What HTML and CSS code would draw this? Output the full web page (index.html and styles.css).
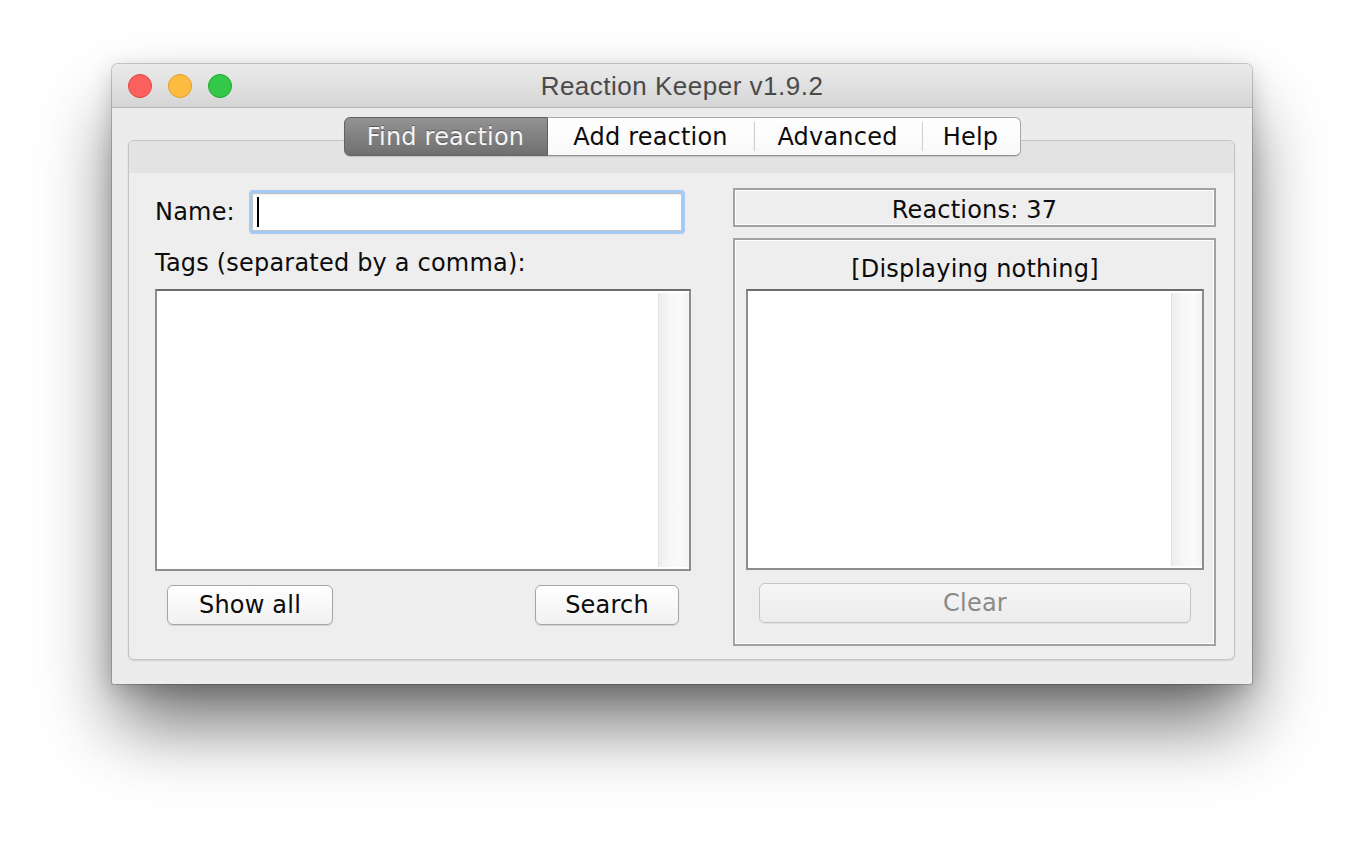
FILE: index.html
```html
<!DOCTYPE html>
<html>
<head>
<meta charset="utf-8">
<title>Reaction Keeper v1.9.2</title>
<link rel="stylesheet" href="styles.css">
</head>
<body>
<div class="window">
  <div class="titlebar">
    <div class="lights">
      <span class="light red"></span>
      <span class="light yellow"></span>
      <span class="light green"></span>
    </div>
    <div class="title">Reaction Keeper v1.9.2</div>
    <div class="spacer"></div>
  </div>
  <div class="content">
    <div class="tabs">
      <div class="tab tab-sel">Find reaction</div>
      <div class="tab tab-add">Add reaction</div>
      <div class="tab tab-adv">Advanced</div>
      <div class="tab tab-help">Help</div>
    </div>
    <div class="pane">
      <div class="pane-band"></div>
      <div class="pane-body">
        <div class="left">
          <div class="name-row">
            <span class="label">Name:</span>
            <div class="input"><span class="caret"></span></div>
          </div>
          <div class="label tags-label">Tags (separated by a comma):</div>
          <div class="listbox tags-box">
            <div class="list-area"></div>
            <div class="scrolltrack"></div>
          </div>
          <div class="button-row">
            <div class="btn btn-show">Show all</div>
            <div class="btn btn-search">Search</div>
          </div>
        </div>
        <div class="right">
          <div class="etched count-box">Reactions: 37</div>
          <div class="etched display-box">
            <div class="display-title">[Displaying nothing]</div>
            <div class="listbox result-box">
              <div class="list-area"></div>
              <div class="scrolltrack"></div>
            </div>
            <div class="btn btn-clear">Clear</div>
          </div>
        </div>
      </div>
    </div>
  </div>
</div>
</body>
</html>
```

FILE: styles.css
```css
html, body {
  margin: 0;
  padding: 0;
  background: #ffffff;
}
body {
  width: 1364px;
  height: 844px;
  overflow: hidden;
  padding: 64px 0 0 112px;
  box-sizing: border-box;
  font-family: "DejaVu Sans", "Noto Sans", sans-serif;
  font-size: 24px;
  letter-spacing: 0.2px;
  color: #0c0c0c;
}
.window {
  width: 1140px;
  height: 620px;
  background: #ececec;
  border-radius: 6px 6px 2px 2px;
  box-shadow: 0 0 0 1px rgba(0,0,0,0.18), 0 44px 70px -6px rgba(0,0,0,0.58), 0 6px 22px rgba(0,0,0,0.18);
  overflow: hidden;
}
.titlebar {
  height: 43px;
  border-bottom: 1px solid #b3b3b3;
  background: linear-gradient(#ebebeb, #d5d5d5);
  display: grid;
  grid-template-columns: 1fr auto 1fr;
  align-items: center;
}
.lights {
  display: flex;
  gap: 16px;
  padding-left: 16px;
}
.light {
  width: 24px;
  height: 24px;
  border-radius: 50%;
  box-sizing: border-box;
}
.red { background: #fc605c; border: 1px solid #e0443e; }
.yellow { background: #fdbc40; border: 1px solid #dea123; }
.green { background: #34c84a; border: 1px solid #1aab29; }
.title {
  font-family: "Liberation Sans", Arial, sans-serif;
  font-size: 26px;
  letter-spacing: 0.5px;
  color: #4a4a4a;
  padding-top: 2px;
}
.content {
  padding: 9px 17px 24px 16px;
}
.tabs {
  position: relative;
  z-index: 2;
  display: flex;
  justify-content: center;
  height: 39px;
  margin-left: 1px;
}
.tab {
  box-sizing: border-box;
  height: 39px;
  display: flex;
  align-items: center;
  justify-content: center;
  background: linear-gradient(#ffffff, #f8f8f8);
  border-top: 1px solid #a9a9a9;
  border-bottom: 1px solid #8f8f8f;
  color: #0c0c0c;
  box-shadow: 0 1px 1px rgba(0,0,0,0.12);
  position: relative;
}
.tab-sel {
  width: 204px;
  background: linear-gradient(#939393, #6f6f6f);
  border: 1px solid #626262;
  border-radius: 6px 0 0 6px;
  color: #f6f6f6;
  text-shadow: 0 -1px 0 rgba(0,0,0,0.35);
}
.tab-add { width: 206px; }
.tab-adv { width: 168px; }
.tab-help {
  width: 99px;
  border-right: 1px solid #a9a9a9;
  border-radius: 0 6px 6px 0;
}
.tab-adv::before, .tab-help::before {
  content: "";
  position: absolute;
  left: 0;
  top: 4px;
  bottom: 4px;
  width: 1px;
  background: #cfcfcf;
}
.pane {
  margin-top: -16px;
  height: 520px;
  box-sizing: border-box;
  border: 1px solid #c4c4c4;
  border-radius: 6px;
  box-shadow: 0 1px 2px rgba(0,0,0,0.12);
  background: #eeeeee;
  overflow: hidden;
  display: flex;
  flex-direction: column;
}
.pane-band {
  height: 32px;
  background: #e3e3e3;
  flex: none;
}
.pane-body {
  flex: 1;
  display: flex;
  gap: 42px;
  padding: 15px 18px 0 26px;
}
.left {
  width: 536px;
  display: flex;
  flex-direction: column;
}
.right {
  width: 483px;
  display: flex;
  flex-direction: column;
}
.name-row {
  margin-top: 2px;
  height: 44px;
  display: flex;
  align-items: center;
}
.label {
  line-height: 28px;
}
.name-row .label {
  margin-right: 14px;
}
.input {
  width: 436px;
  height: 44px;
  box-sizing: border-box;
  border: 3px solid #a4cbf1;
  border-radius: 4px;
  background: #fff;
  box-shadow: inset 0 0 0 1px #c2c2c2, inset 0 2px 2px rgba(0,0,0,0.08);
  display: flex;
  align-items: center;
  padding-left: 5px;
}
.caret {
  width: 2px;
  height: 30px;
  background: #000;
}
.tags-label {
  margin-top: 15px;
}
.listbox {
  box-sizing: border-box;
  border: 2px solid #8d8d8d;
  border-top-color: #6c6c6c;
  background: #fff;
  display: flex;
}
.tags-box {
  margin-top: 12px;
  height: 282px;
}
.list-area {
  flex: 1;
}
.scrolltrack {
  width: 31px;
  margin: 2px 0;
  box-sizing: border-box;
  border-left: 1px solid #e2e2e2;
  background: linear-gradient(to right, #eeeeee, #f8f8f8 40%, #fafafa 70%, #f3f3f3);
}
.button-row {
  margin-top: 14px;
  padding: 0 12px;
  display: flex;
  justify-content: space-between;
}
.btn {
  height: 40px;
  box-sizing: border-box;
  border: 1px solid #a6a6a6;
  border-radius: 6px;
  background: linear-gradient(#ffffff, #f1f1f1);
  box-shadow: 0 1px 1px rgba(0,0,0,0.12);
  display: flex;
  align-items: center;
  justify-content: center;
  color: #0c0c0c;
}
.btn-show { width: 166px; }
.btn-search { width: 144px; }
.etched {
  box-sizing: border-box;
  border: 2px solid #a2a2a2;
  box-shadow: inset 0 0 0 1px #ffffff;
}
.count-box {
  height: 39px;
  display: flex;
  align-items: center;
  justify-content: center;
  padding-top: 4px;
}
.display-box {
  margin-top: 11px;
  height: 408px;
  padding: 0 10px 0 11px;
  display: flex;
  flex-direction: column;
}
.display-title {
  margin-top: 15px;
  line-height: 28px;
  text-align: center;
}
.result-box {
  margin-top: 6px;
  height: 281px;
}
.btn-clear {
  margin: 13px 13px 0 13px;
  border-color: #c5c5c5;
  background: linear-gradient(#f6f6f6, #ececec);
  color: #8a8a8a;
  box-shadow: 0 1px 1px rgba(0,0,0,0.06);
}
```
